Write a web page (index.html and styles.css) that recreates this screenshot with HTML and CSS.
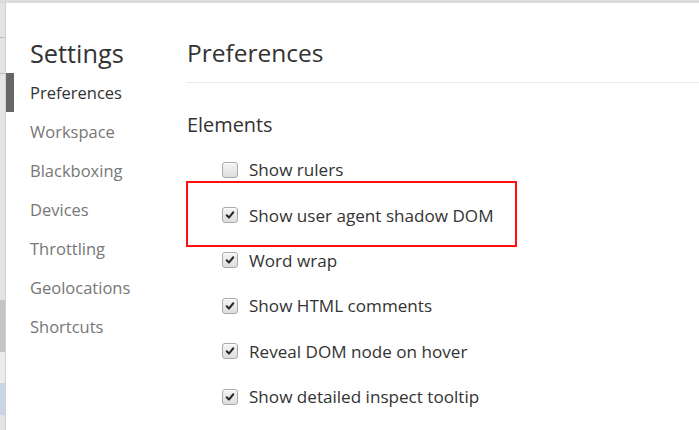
FILE: index.html
```html
<!DOCTYPE html>
<html>
<head>
<meta charset="utf-8">
<link rel="stylesheet" href="styles.css">
</head>
<body>
<div class="topbar"></div>
<div class="main">
  <div class="strip">
    <div class="strip-seg s1"></div>
    <div class="strip-seg s2"></div>
    <div class="strip-seg s3"></div>
    <div class="strip-seg s4"></div>
    <div class="strip-seg s5"></div>
    <div class="strip-seg s6"></div>
  </div>
  <div class="dialog">
    <div class="sidebar">
      <div class="title">Settings</div>
      <ul class="nav">
        <li class="nav-item selected">Preferences</li>
        <li class="nav-item">Workspace</li>
        <li class="nav-item">Blackboxing</li>
        <li class="nav-item">Devices</li>
        <li class="nav-item">Throttling</li>
        <li class="nav-item">Geolocations</li>
        <li class="nav-item">Shortcuts</li>
      </ul>
    </div>
    <div class="content">
      <div class="heading">Preferences</div>
      <div class="section-title">Elements</div>
      <div class="options">
        <label class="option"><span class="cb"></span><span>Show rulers</span></label>
        <label class="option highlighted"><span class="cb checked"><svg viewBox="0 0 14 14"><path d="M3.2 7.4 L5.8 10 L10.8 3.8" /></svg></span><span>Show user agent shadow DOM</span></label>
        <label class="option"><span class="cb checked"><svg viewBox="0 0 14 14"><path d="M3.2 7.4 L5.8 10 L10.8 3.8" /></svg></span><span>Word wrap</span></label>
        <label class="option"><span class="cb checked"><svg viewBox="0 0 14 14"><path d="M3.2 7.4 L5.8 10 L10.8 3.8" /></svg></span><span>Show HTML comments</span></label>
        <label class="option"><span class="cb checked"><svg viewBox="0 0 14 14"><path d="M3.2 7.4 L5.8 10 L10.8 3.8" /></svg></span><span>Reveal DOM node on hover</span></label>
        <label class="option"><span class="cb checked"><svg viewBox="0 0 14 14"><path d="M3.2 7.4 L5.8 10 L10.8 3.8" /></svg></span><span>Show detailed inspect tooltip</span></label>
      </div>
    </div>
  </div>
</div>
</body>
</html>
```
FILE: styles.css
```css
* { box-sizing: border-box; }
html, body {
  margin: 0;
  padding: 0;
  width: 699px;
  height: 430px;
  overflow: hidden;
  background: #fff;
  font-family: "Open Sans", "Noto Sans", sans-serif;
}
body { display: flex; flex-direction: column; }
.topbar {
  height: 3px;
  background: #dcdcdc;
  flex: none;
}
.main {
  flex: 1;
  display: flex;
}
.strip {
  width: 6px;
  flex: none;
  display: flex;
  flex-direction: column;
  background: #e4e4e4;
  border-right: 1px solid #d0d0d0;
}
.strip-seg { flex: none; }
.s1 { height: 35px; border-bottom: 1px solid #bdbdbd; }
.s2 { height: 36px; border-bottom: 1px solid #bdbdbd; }
.s3 { height: 226px; }
.s4 { height: 52px; background: #c4c4c4; }
.s5 { height: 31px; background: #ececec; }
.s6 { height: 32px; background: #c9d5e6; }
.dialog {
  flex: 1;
  display: flex;
  background: #fff;
}
.sidebar {
  width: 180px;
  flex: none;
}
.title {
  font-size: 25.3px;
  color: #333;
  padding: 33px 0 0 24px;
  line-height: 34px;
  height: 70px;
}
.nav {
  list-style: none;
  margin: 0;
  padding: 0;
}
.nav-item {
  height: 39px;
  line-height: 39px;
  font-size: 16.5px;
  color: #777;
  border-left: 8px solid transparent;
  padding-left: 16px;
}
.nav-item.selected {
  color: #333;
  border-left-color: #666;
}
.content {
  flex: 1;
  padding-top: 33px;
}
.heading {
  font-size: 24.5px;
  color: #333;
  line-height: 34px;
  height: 47px;
  padding-left: 1px;
  border-bottom: 1px solid #ebebeb;
}
.section-title {
  font-size: 19.9px;
  color: #333;
  padding: 29px 0 0 1px;
  line-height: 26px;
}
.options {
  display: flex;
  flex-direction: column;
  padding-left: 36px;
  padding-top: 9px;
}
.option {
  display: flex;
  align-items: center;
  height: 45.4px;
  font-size: 17.1px;
  color: #333;
  position: relative;
}
.highlighted::before {
  content: "";
  position: absolute;
  left: -36px;
  top: -11px;
  width: 327px;
  height: 62px;
  border: 2px solid #ff1010;
}
.cb {
  width: 16px;
  height: 16px;
  border: 1px solid #a9a9a9;
  border-radius: 3px;
  background: linear-gradient(#f4f4f4, #dedede);
  margin-right: 11px;
  display: flex;
  align-items: center;
  justify-content: center;
  box-shadow: inset 0 1px 0 #fff;
}
.cb svg {
  width: 12px;
  height: 12px;
  fill: none;
  stroke: #2a2a2a;
  stroke-width: 2.4;
  stroke-linecap: round;
  stroke-linejoin: round;
}
```
